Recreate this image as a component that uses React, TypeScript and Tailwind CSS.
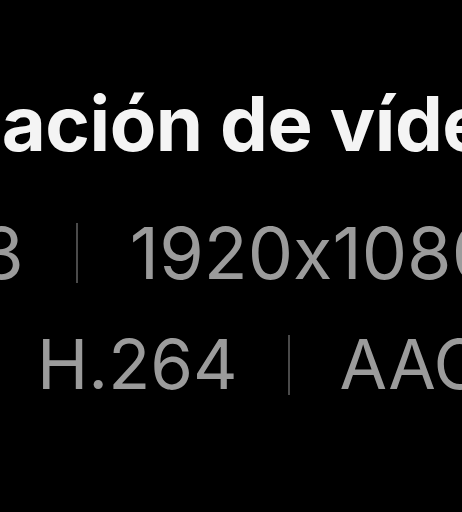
export default function App() {
  return (
    <div className="w-[462px] h-[512px] bg-black overflow-hidden font-['Inter','Noto_Sans',sans-serif] [font-feature-settings:'calt'_0]">
      <div className="pt-[85px] flex flex-col whitespace-nowrap">
        <h1 className="ml-[-240px] text-[76px] leading-none font-bold text-[#f4f4f4] tracking-[-0.5px]">
          Información de vídeo
        </h1>
        <div className="mt-[56px] ml-[-160px] flex items-center text-[72px] leading-none text-[#9b9b9b]">
          <span>02:13</span>
          <div className="mx-[52px] h-[60px] w-[2px] shrink-0 bg-[#4a4a4a]" />
          <span>1920x1080</span>
        </div>
        <div className="mt-[41px] ml-[-220px] flex items-center text-[69px] leading-none text-[#9b9b9b]">
          <span>MP4</span>
          <div className="mx-[52px] h-[60px] w-[2px] shrink-0 bg-[#4a4a4a]" />
          <span>H.264</span>
          <div className="mx-[50px] h-[60px] w-[2px] shrink-0 bg-[#4a4a4a]" />
          <span>AAC</span>
        </div>
      </div>
    </div>
  );
}
